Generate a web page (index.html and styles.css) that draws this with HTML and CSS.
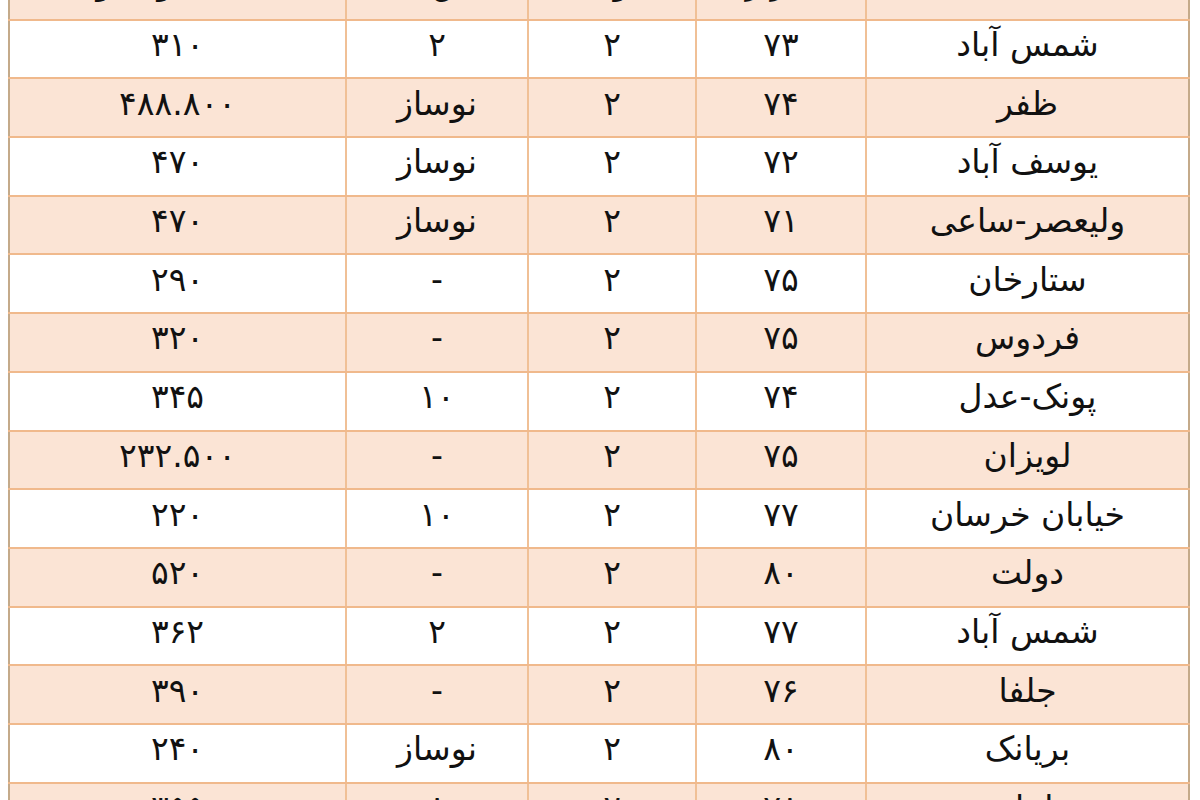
FILE: index.html
```html
<!DOCTYPE html>
<html lang="fa" dir="rtl">
<head>
<meta charset="utf-8">
<title>جدول قیمت</title>
<link rel="stylesheet" href="styles.css">
</head>
<body>
<table class="price-table">
  <colgroup>
    <col class="c-name"><col class="c-area"><col class="c-room"><col class="c-age"><col class="c-price">
  </colgroup>
  <tbody>
    <tr class="alt head"><td>منطقه</td><td>متراژ</td><td>خواب</td><td>سن بنا</td><td>قیمت (میلیون تومان)</td></tr>
    <tr><td>شمس آباد</td><td>۷۳</td><td>۲</td><td>۲</td><td>۳۱۰</td></tr>
    <tr class="alt"><td>ظفر</td><td>۷۴</td><td>۲</td><td>نوساز</td><td>۴۸۸.۸۰۰</td></tr>
    <tr><td>یوسف آباد</td><td>۷۲</td><td>۲</td><td>نوساز</td><td>۴۷۰</td></tr>
    <tr class="alt"><td>ولیعصر-ساعی</td><td>۷۱</td><td>۲</td><td>نوساز</td><td>۴۷۰</td></tr>
    <tr><td>ستارخان</td><td>۷۵</td><td>۲</td><td>-</td><td>۲۹۰</td></tr>
    <tr class="alt"><td>فردوس</td><td>۷۵</td><td>۲</td><td>-</td><td>۳۲۰</td></tr>
    <tr><td>پونک-عدل</td><td>۷۴</td><td>۲</td><td>۱۰</td><td>۳۴۵</td></tr>
    <tr class="alt"><td>لویزان</td><td>۷۵</td><td>۲</td><td>-</td><td>۲۳۲.۵۰۰</td></tr>
    <tr><td>خیابان خرسان</td><td>۷۷</td><td>۲</td><td>۱۰</td><td>۲۲۰</td></tr>
    <tr class="alt"><td>دولت</td><td>۸۰</td><td>۲</td><td>-</td><td>۵۲۰</td></tr>
    <tr><td>شمس آباد</td><td>۷۷</td><td>۲</td><td>۲</td><td>۳۶۲</td></tr>
    <tr class="alt"><td>جلفا</td><td>۷۶</td><td>۲</td><td>-</td><td>۳۹۰</td></tr>
    <tr><td>بریانک</td><td>۸۰</td><td>۲</td><td>نوساز</td><td>۲۴۰</td></tr>
    <tr class="alt"><td>تهرانپارس</td><td>۷۸</td><td>۲</td><td>۸</td><td>۳۵۵</td></tr>
  </tbody>
</table>
</body>
</html>
```
FILE: styles.css
```css
html, body {
  margin: 0;
  padding: 0;
  background: #ffffff;
}
body {
  font-family: "DejaVu Sans", "Noto Sans", sans-serif;
  color: #111111;
  overflow: hidden;
}
.price-table {
  direction: rtl;
  table-layout: fixed;
  border-collapse: collapse;
  width: 1180px;
  margin: -40px 10px 0 10px;
  border-left: 2px solid #c4aa8a;
  border-right: 2px solid #c4aa8a;
}
.c-name { width: 323px; }
.c-area { width: 170px; }
.c-room { width: 168px; }
.c-age { width: 182px; }
.c-price { width: 337px; }
.price-table tr {
  height: 58.7px;
  background: #ffffff;
}
.price-table tr.alt {
  background: #fbe4d5;
}
.price-table td {
  border-top: 2px solid #f0b98c;
  border-bottom: 2px solid #f0b98c;
  border-left: 2px solid #f0c096;
  border-right: 2px solid #f0c096;
  text-align: center;
  vertical-align: middle;
  font-size: 33px;
  padding: 0 0 9px 0;
  line-height: 1;
}
.price-table tr.head td {
  padding-bottom: 16px;
}
.price-table td:first-child {
  border-right: 2px solid #c4aa8a;
}
.price-table td:last-child {
  border-left: 2px solid #c4aa8a;
}
```
